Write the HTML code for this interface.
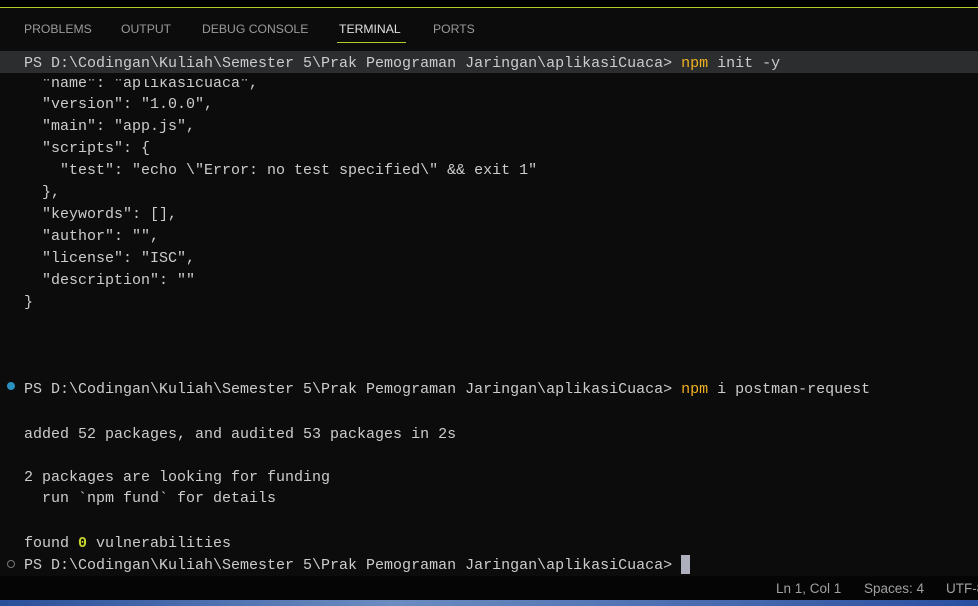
<!DOCTYPE html>
<html><head><style>
html,body{margin:0;width:978px;height:606px;background:#0c0c0c;overflow:hidden;position:relative;font-family:"Liberation Mono",monospace;}
.topbar{position:absolute;left:0;top:0;width:978px;height:7px;background:#000;}
.tab{position:absolute;top:22px;font-family:"Liberation Sans",sans-serif;font-size:12.2px;color:#9a9a9a;}
.hl{position:absolute;left:0;top:51px;width:978px;height:22px;background:#2b2d2e;}
.l{position:absolute;left:24px;font-size:15px;color:#cccccc;white-space:pre;line-height:22px;}
.y{color:#f0b020}
.status{position:absolute;left:0;top:576px;width:978px;height:24px;background:#050505;font-family:"Liberation Sans",sans-serif;font-size:13.5px;color:#a0a0a0;white-space:nowrap;overflow:hidden;}
.blue{position:absolute;left:0;top:600px;width:978px;height:6px;background:linear-gradient(90deg,#2a4f9a,#6c8cc0 40%,#2b4fa0);}
</style></head><body>
<div class="topbar"></div>
<div style="position:absolute;left:0;top:7px;width:978px;height:1px;background:#b5c92a"></div>
<div class="tab" style="left:24px">PROBLEMS</div>
<div class="tab" style="left:121px">OUTPUT</div>
<div class="tab" style="left:202px">DEBUG CONSOLE</div>
<div class="tab" style="left:339px;color:#e0e0e0">TERMINAL</div>
<div style="position:absolute;left:337px;top:42px;width:69px;height:1px;background:#b5c92a"></div>
<div class="tab" style="left:433px">PORTS</div>
<div class="hl"></div>
<div class="l" style="top:53px">PS D:\Codingan\Kuliah\Semester 5\Prak Pemograman Jaringan\aplikasiCuaca&gt; <span class="y">npm</span> init -y</div>
<div class="l" style="top:73px;clip-path:inset(6px 0 0 0)">  "name": "aplikasicuaca",</div>
<div class="l" style="top:94px">  "version": "1.0.0",</div>
<div class="l" style="top:116px">  "main": "app.js",</div>
<div class="l" style="top:138px">  "scripts": {</div>
<div class="l" style="top:160px">    "test": "echo \"Error: no test specified\" &amp;&amp; exit 1"</div>
<div class="l" style="top:182px">  },</div>
<div class="l" style="top:204px">  "keywords": [],</div>
<div class="l" style="top:226px">  "author": "",</div>
<div class="l" style="top:248px">  "license": "ISC",</div>
<div class="l" style="top:270px">  "description": ""</div>
<div class="l" style="top:292px">}</div>
<div style="position:absolute;left:7px;top:382px;width:8px;height:8px;border-radius:50%;background:#2a90c0"></div>
<div class="l" style="top:379px">PS D:\Codingan\Kuliah\Semester 5\Prak Pemograman Jaringan\aplikasiCuaca&gt; <span class="y">npm</span> i postman-request</div>
<div class="l" style="top:424px">added 52 packages, and audited 53 packages in 2s</div>
<div class="l" style="top:467px">2 packages are looking for funding</div>
<div class="l" style="top:488px">  run `npm fund` for details</div>
<div class="l" style="top:533px">found <b style="color:#c8d630">0</b> vulnerabilities</div>
<div style="position:absolute;left:7px;top:560px;width:6px;height:6px;border-radius:50%;border:1.5px solid #777"></div>
<div class="l" style="top:555px">PS D:\Codingan\Kuliah\Semester 5\Prak Pemograman Jaringan\aplikasiCuaca&gt; </div>
<div style="position:absolute;left:681px;top:555px;width:9px;height:19px;background:#aeb0bd"></div>
<div class="status"><span style="position:absolute;left:776px;top:5px">Ln 1, Col 1</span><span style="position:absolute;left:864px;top:5px">Spaces: 4</span><span style="position:absolute;left:946px;top:5px">UTF-8</span></div>
<div class="blue"></div>
</body></html>
